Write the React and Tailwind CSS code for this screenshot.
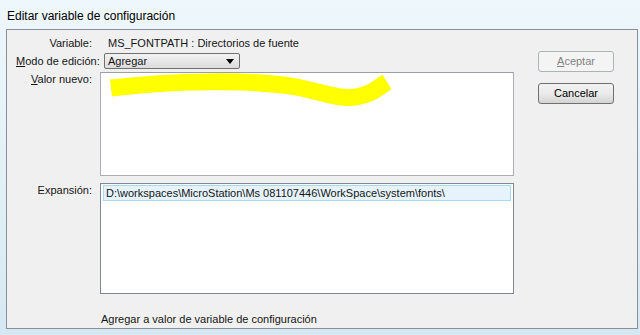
import React from "react"

const font = { fontFamily: "'Liberation Sans', Arial, sans-serif" }

const Scribble = () => (
  <svg width="300" height="40" viewBox="0 0 300 40" className="absolute left-0 top-0">
    <path
      d="M10 15 C70 8 150 6 195 14 C225 20 235 26 255 24 C270 22 278 14 286 9"
      stroke="#ffff00"
      strokeWidth="17"
      fill="none"
      strokeLinecap="butt"
    />
  </svg>
)

export default function App() {
  return (
    <div
      className="w-[640px] h-[335px] overflow-hidden bg-gradient-to-b from-[#eef7fb] via-[#e3f1f7] to-[#d5e8f1] text-[11px] text-[#151515] flex flex-col"
      style={font}
    >
      <div className="h-[29px] shrink-0 pl-[7px] pt-[7px] text-[12px] text-black">
        Editar variable de configuración
      </div>
      <div className="ml-[6px] mr-[2px] h-[300px] border border-[#8a9099] bg-[#f0f0f0] flex">
        <div className="w-[520px] flex flex-col">
          <div className="flex items-center h-[13px] mt-[7px]">
            <span className="w-[85px] text-right">Variable:</span>
            <span className="ml-[16px]">MS_FONTPATH : Directorios de fuente</span>
          </div>
          <div className="flex items-center h-[16px] mt-[3px]">
            <span className="ml-[9px] w-[80px] text-right whitespace-nowrap">
              <u>M</u>odo de edición:
            </span>
            <div className="ml-[8px] w-[136px] h-[16px] rounded-[2px] border border-[#707070] bg-gradient-to-b from-[#f3f3f3] to-[#dcdcdc] flex items-center justify-between pl-[3px] pr-[5px]">
              <span>Agregar</span>
              <svg width="8" height="5" viewBox="0 0 8 5">
                <path d="M0 0 H8 L4 5 Z" fill="#000" />
              </svg>
            </div>
          </div>
          <div className="flex mt-[3px]">
            <span className="w-[85px] text-right leading-[13px] mt-[1px]">
              <u>V</u>alor nuevo:
            </span>
            <div className="relative ml-[8px] w-[414px] h-[104px] bg-white border border-[#abadb3] border-t-[#9a9ea6]">
              <Scribble />
            </div>
          </div>
          <div className="flex mt-[7px]">
            <span className="w-[85px] text-right leading-[13px] mt-[1px]">Expansión:</span>
            <div className="ml-[8px] w-[414px] h-[111px] bg-white border border-[#828790] pt-[1px] pl-[2px] pr-[2px]">
              <div className="h-[16px] border border-[#a9d8f7] bg-[#e6f3fc] flex items-center pl-[2px]">
                D:\workspaces\MicroStation\Ms 081107446\WorkSpace\system\fonts\
              </div>
            </div>
          </div>
          <div className="ml-[94px] mt-[17px]">Agregar a valor de variable de configuración</div>
        </div>
        <div className="flex flex-col ml-[11px] mt-[21px] gap-[11px]">
          <div className="w-[76px] h-[21px] rounded-[3px] border border-[#adb2b5] bg-[#f4f4f4] text-[#838383] flex items-center justify-center">
            <span>
              <u>A</u>ceptar
            </span>
          </div>
          <div className="w-[76px] h-[21px] rounded-[3px] border border-[#707070] bg-gradient-to-b from-[#f2f2f2] via-[#ebebeb] to-[#d3d3d3] text-black flex items-center justify-center">
            Cancelar
          </div>
        </div>
      </div>
    </div>
  )
}
